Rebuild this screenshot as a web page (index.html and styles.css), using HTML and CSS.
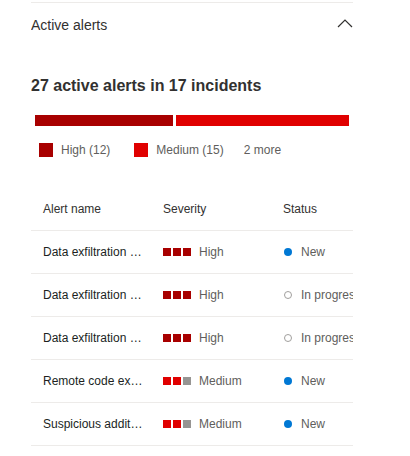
FILE: index.html
```html
<!DOCTYPE html>
<html>
<head>
<meta charset="utf-8">
<link rel="stylesheet" href="styles.css">
</head>
<body>
<div class="panel">
  <div class="section-head">
    <span class="section-title">Active alerts</span>
    <svg class="chevron" width="16" height="10" viewBox="0 0 16 10"><path d="M1 9 L8 2 L15 9" fill="none" stroke="#323130" stroke-width="1.2"/></svg>
  </div>
  <h2 class="summary">27 active alerts in 17 incidents</h2>
  <div class="bar">
    <div class="seg high" style="width:138px"></div>
    <div class="seg medium" style="width:173px"></div>
  </div>
  <div class="legend">
    <span class="legend-item first"><span class="swatch high"></span>High (12)</span>
    <span class="legend-item"><span class="swatch medium"></span>Medium (15)</span>
    <span class="legend-item">2 more</span>
  </div>
  <div class="table">
    <div class="row header">
      <div class="cell">Alert name</div>
      <div class="cell">Severity</div>
      <div class="cell">Status</div>
    </div>
    <div class="row">
      <div class="cell name">Data exfiltration detected</div>
      <div class="cell sev"><span class="sq h"></span><span class="sq h"></span><span class="sq h last"></span><span>High</span></div>
      <div class="cell status"><span class="dot new"></span><span>New</span></div>
    </div>
    <div class="row">
      <div class="cell name">Data exfiltration detected</div>
      <div class="cell sev"><span class="sq h"></span><span class="sq h"></span><span class="sq h last"></span><span>High</span></div>
      <div class="cell status"><span class="dot prog"></span><span>In progress</span></div>
    </div>
    <div class="row">
      <div class="cell name">Data exfiltration detected</div>
      <div class="cell sev"><span class="sq h"></span><span class="sq h"></span><span class="sq h last"></span><span>High</span></div>
      <div class="cell status"><span class="dot prog"></span><span>In progress</span></div>
    </div>
    <div class="row">
      <div class="cell name">Remote code execution attempt</div>
      <div class="cell sev"><span class="sq m"></span><span class="sq m"></span><span class="sq g last"></span><span>Medium</span></div>
      <div class="cell status"><span class="dot new"></span><span>New</span></div>
    </div>
    <div class="row">
      <div class="cell name">Suspicious additions to registry</div>
      <div class="cell sev"><span class="sq m"></span><span class="sq m"></span><span class="sq g last"></span><span>Medium</span></div>
      <div class="cell status"><span class="dot new"></span><span>New</span></div>
    </div>
  </div>
</div>
</body>
</html>
```
FILE: styles.css
```css
html, body {
  margin: 0;
  padding: 0;
  background: #ffffff;
}
body {
  font-family: "Segoe UI", "Liberation Sans", Arial, sans-serif;
  color: #323130;
}
.panel {
  margin-left: 31px;
  width: 322px;
  border-top: 1px solid #edebe9;
  margin-top: 2px;
  overflow: hidden;
}
.section-head {
  display: flex;
  justify-content: space-between;
  align-items: center;
  height: 44px;
}
.section-title {
  font-size: 14px;
  color: #323130;
}
.chevron {
  margin-top: -4px;
}
.summary {
  margin: 29px 0 0 0;
  font-size: 16px;
  font-weight: 700;
  line-height: 20px;
  color: #323130;
}
.bar {
  display: flex;
  gap: 3px;
  margin: 19px 0 0 4px;
  height: 11px;
}
.seg { height: 100%; }
.seg.high { background: #a80000; }
.seg.medium { background: #e00000; }
.legend {
  display: flex;
  margin: 16px 0 0 8px;
  font-size: 12px;
  color: #605e5c;
  align-items: center;
  height: 16px;
}
.legend-item {
  display: flex;
  align-items: center;
  margin-right: 20px;
}
.legend-item.first { margin-right: 24px; }
.swatch {
  width: 14px;
  height: 14px;
  margin-right: 8px;
  display: inline-block;
}
.swatch.high { background: #a80000; }
.swatch.medium { background: #e00000; }
.table {
  margin-top: 30px;
  font-size: 12px;
}
.row {
  display: grid;
  grid-template-columns: 120px 120px 120px;
  height: 42px;
  align-items: center;
  border-bottom: 1px solid #edebe9;
}
.row.header {
  color: #323130;
}
.cell {
  padding-left: 12px;
  white-space: nowrap;
  overflow: hidden;
  text-overflow: ellipsis;
}
.cell.name {
  padding-right: 8px;
  color: #201f1e;
}
.cell.sev, .cell.status {
  color: #605e5c;
  display: flex;
  align-items: center;
  overflow: visible;
}
.sq {
  width: 8px;
  height: 8px;
  margin-right: 2px;
  flex: none;
}
.sq.last { margin-right: 8px; }
.sq.h { background: #a80000; }
.sq.m { background: #e00000; }
.sq.g { background: #979593; }
.dot {
  width: 8px;
  height: 8px;
  border-radius: 50%;
  flex: none;
  margin-left: 1px;
  margin-right: 9px;
  box-sizing: border-box;
}
.dot.new { background: #0078d4; }
.dot.prog { border: 1px solid #a19f9d; background: #fff; }
```
